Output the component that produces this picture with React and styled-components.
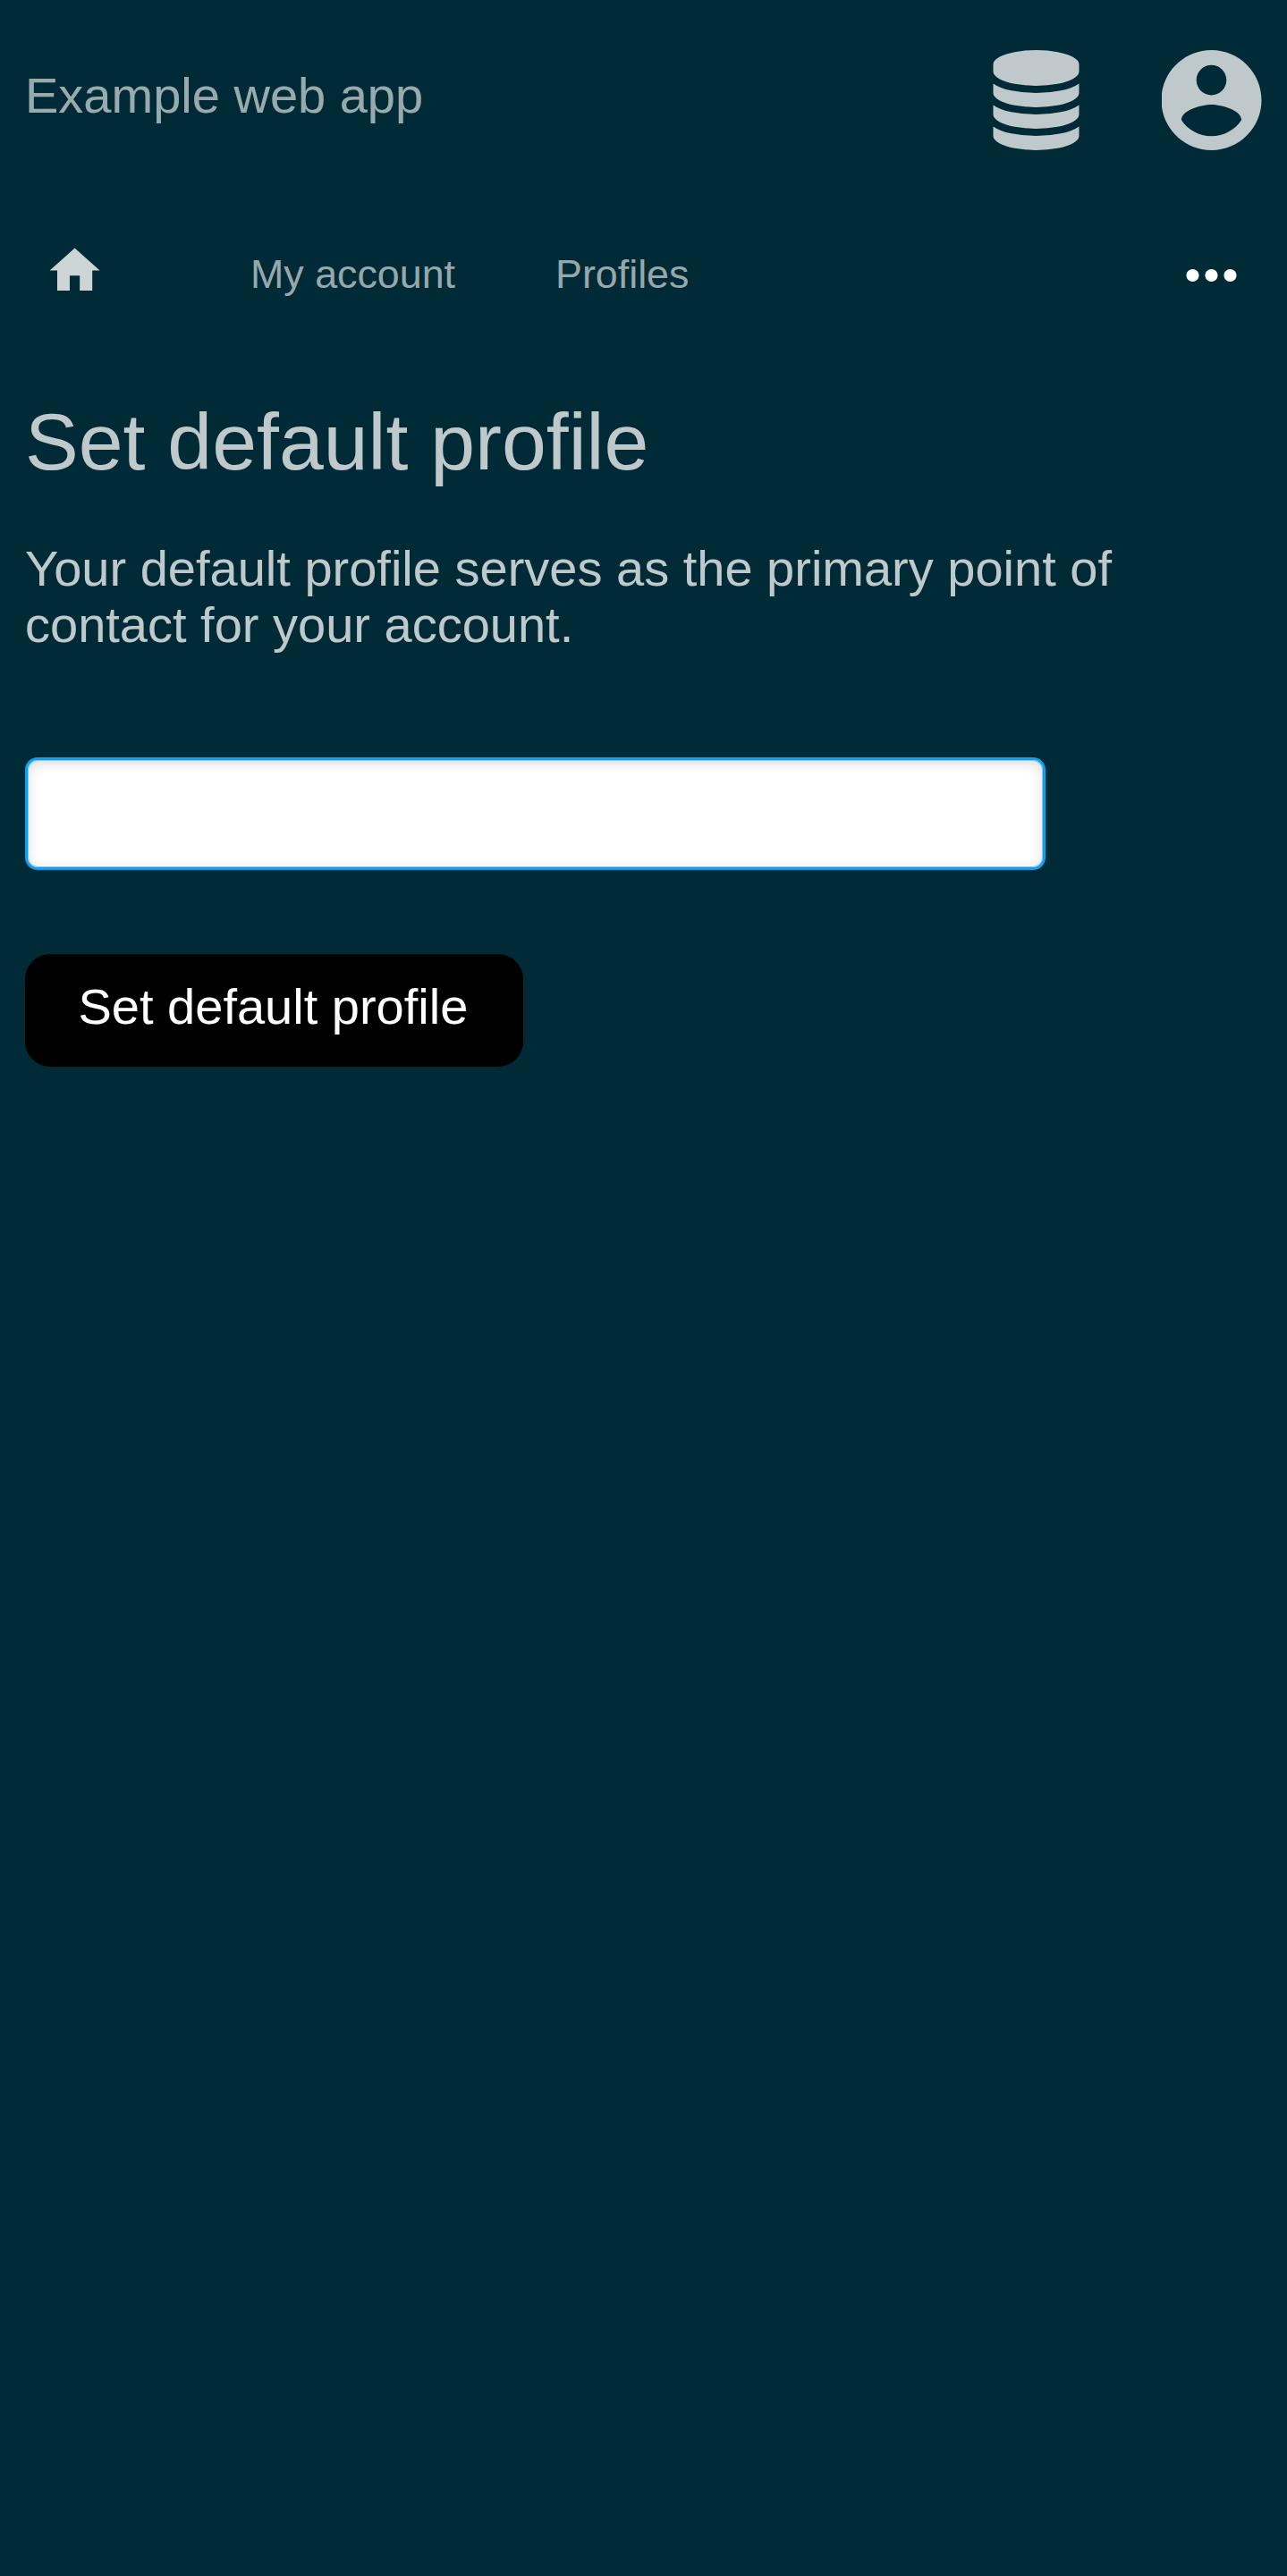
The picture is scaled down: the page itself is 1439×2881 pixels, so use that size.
import React from "react";
import styled, { createGlobalStyle } from "styled-components";

const GlobalStyle = createGlobalStyle`
  *, *::before, *::after { box-sizing: border-box; }
  html, body { margin: 0; background: #002b36; }
  body { font-family: "Liberation Sans", Arial, sans-serif; font-size: 56px; line-height: 63px; }
`;

const Page = styled.div`
  min-height: 100vh;
  background: #002b36;
  color: rgba(255, 255, 255, 0.75);
`;

const Header = styled.header`
  display: flex;
  justify-content: space-between;
  align-items: flex-start;
  height: 224px;
  padding: 56px 28px 0;
`;

const Brand = styled.a`
  margin-top: 19px;
  color: rgba(255, 255, 255, 0.6);
`;

const Actions = styled.div`
  display: flex;
  gap: 92px;
`;

const Icon = styled.svg`
  display: block;
  flex: none;
  width: ${(p) => p.$width}px;
  height: ${(p) => p.$height}px;
  fill: currentColor;
`;

const Nav = styled.nav`
  display: flex;
  align-items: flex-start;
  height: 220px;
  padding: 42px 42px 0 50.4px;
  font-size: 44.8px;
  line-height: 51px;
`;

const HomeLink = styled.a`
  margin: 2.8px 162.4px 0 0;
  color: rgba(255, 255, 255, 0.8);
`;

const NavLink = styled.a`
  margin: 15px 112px 0 0;
  color: rgba(255, 255, 255, 0.6);
`;

const MoreButton = styled.a`
  margin-left: auto;
  color: #fff;
`;

const Main = styled.main`
  display: flex;
  flex-direction: column;
  align-items: flex-start;
  padding: 0 28px;
`;

const Title = styled.h1`
  margin: 0 0 60px;
  font-size: 89.6px;
  font-weight: 400;
  line-height: 100px;
`;

const Lead = styled.p`
  margin: 0 0 117px;
`;

const Field = styled.input`
  width: 1141px;
  height: 126px;
  margin: 0 0 94px;
  padding: 0 28px;
  border: 3px solid #129fea;
  border-radius: 14px;
  outline: none;
  background: #fff;
  box-shadow: inset 0 0 0 1px #7cc8f3, inset 0 3.5px 14px rgba(0, 0, 0, 0.15);
  font: inherit;
`;

const Submit = styled.button`
  width: 556.7px;
  height: 126px;
  padding: 0 0 10px 59.5px;
  border: 0;
  border-radius: 28px;
  background: #000;
  color: #fff;
  font: inherit;
  text-align: left;
`;

const DatabaseIcon = () => (
  <Icon $width={97} $height={112} viewBox="0 0 1536 1792">
    <path d="M768 768q237 0 443-43t325-127v170q0 69-103 128t-280 93.5-385 34.5-385-34.5-280-93.5-103-128v-170q119 84 325 127t443 43zm0 768q237 0 443-43t325-127v170q0 69-103 128t-280 93.5-385 34.5-385-34.5-280-93.5-103-128v-170q119 84 325 127t443 43zm0-384q237 0 443-43t325-127v170q0 69-103 128t-280 93.5-385 34.5-385-34.5-280-93.5-103-128v-170q119 84 325 127t443 43zm0-1152q208 0 385 34.5t280 93.5 103 128v128q0 69-103 128t-280 93.5-385 34.5-385-34.5-280-93.5-103-128v-128q0-69 103-128t280-93.5 385-34.5z" />
  </Icon>
);

const AccountIcon = () => (
  <Icon $width={112} $height={112} viewBox="2.09 2 20 20">
    <path d="M12 2C6.48 2 2 6.48 2 12s4.48 10 10 10 10-4.48 10-10S17.52 2 12 2zm0 3c1.66 0 3 1.34 3 3s-1.34 3-3 3-3-1.34-3-3 1.34-3 3-3zm0 14.2c-2.5 0-4.71-1.28-6-3.22.03-1.99 4-3.08 6-3.08 1.99 0 5.97 1.09 6 3.08-1.29 1.94-3.5 3.22-6 3.22z" />
  </Icon>
);

const HomeIcon = () => (
  <Icon $width={67.2} $height={67.2} viewBox="0 0 24 24">
    <path d="M10 20v-6h4v6h5v-8h3L12 3 2 12h3v8z" />
  </Icon>
);

const MoreIcon = () => (
  <Icon $width={84} $height={84} viewBox="0.14 0 24 24">
    <path d="M6 10c-1.1 0-2 .9-2 2s.9 2 2 2 2-.9 2-2-.9-2-2-2zm12 0c-1.1 0-2 .9-2 2s.9 2 2 2 2-.9 2-2-.9-2-2-2zm-6 0c-1.1 0-2 .9-2 2s.9 2 2 2 2-.9 2-2-.9-2-2-2z" />
  </Icon>
);

export default function App() {
  return (
    <Page>
      <GlobalStyle />
      <Header>
        <Brand>Example web app</Brand>
        <Actions>
          <DatabaseIcon />
          <AccountIcon />
        </Actions>
      </Header>
      <Nav>
        <HomeLink aria-label="Home"><HomeIcon /></HomeLink>
        <NavLink>My account</NavLink>
        <NavLink>Profiles</NavLink>
        <MoreButton aria-label="More"><MoreIcon /></MoreButton>
      </Nav>
      <Main>
        <Title>Set default profile</Title>
        <Lead>Your default profile serves as the primary point of contact for your account.</Lead>
        <Field type="text" />
        <Submit type="button">Set default profile</Submit>
      </Main>
    </Page>
  );
}
